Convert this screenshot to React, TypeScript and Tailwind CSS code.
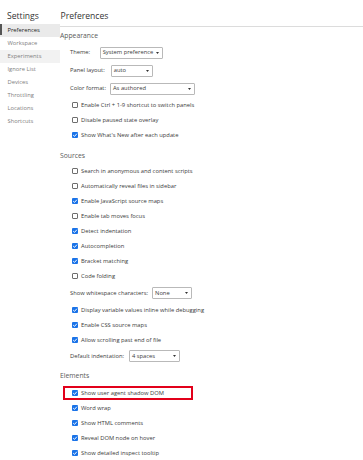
import React from 'react';

type Row =
  | { kind: 'check'; label: string; on: boolean; marked?: boolean }
  | { kind: 'select'; label: string; value: string; box: string; h: string };

const Check: React.FC<{ on: boolean }> = ({ on }) =>
  on ? (
    <span className="flex h-[6px] w-[6px] shrink-0 items-center justify-center rounded-[1px] bg-[#1a73e8]">
      <svg viewBox="0 0 10 10" className="h-[6px] w-[6px]">
        <path d="M2 5.2 L4.2 7.3 L8.2 2.8" fill="none" stroke="#fff" strokeWidth="1.6" />
      </svg>
    </span>
  ) : (
    <span className="h-[6px] w-[6px] shrink-0 rounded-[1px] border border-[#6e6e6e] bg-white" />
  );

const Select: React.FC<{ value: string; box: string }> = ({ value, box }) => (
  <span
    className={`flex h-[12px] items-center justify-between rounded-[1px] border border-[#b9b9b9] bg-white pl-[2px] pr-[3px] text-[#3a3a3a] ${box}`}
  >
    <span>{value}</span>
    <svg viewBox="0 0 6 4" className="h-[2px] w-[3px]">
      <path d="M0 0 H6 L3 4 Z" fill="#333" />
    </svg>
  </span>
);

const sections: { title: string; mt: string; rows: Row[] }[] = [
  {
    title: 'Appearance',
    mt: 'mt-[1.5px]',
    rows: [
      { kind: 'select', label: 'Theme:', value: 'System preference', box: 'ml-[9.5px] w-[63px]', h: 'h-[18px]' },
      { kind: 'select', label: 'Panel layout:', value: 'auto', box: 'ml-[6px] w-[42px]', h: 'h-[18px]' },
      { kind: 'select', label: 'Color format:', value: 'As authored', box: 'ml-[4px] w-[85px]', h: 'h-[18px]' },
      { kind: 'check', label: 'Enable Ctrl + 1-9 shortcut to switch panels', on: false },
      { kind: 'check', label: 'Disable paused state overlay', on: false },
      { kind: 'check', label: "Show What's New after each update", on: true },
    ],
  },
  {
    title: 'Sources',
    mt: 'mt-[6px]',
    rows: [
      { kind: 'check', label: 'Search in anonymous and content scripts', on: false },
      { kind: 'check', label: 'Automatically reveal files in sidebar', on: false },
      { kind: 'check', label: 'Enable JavaScript source maps', on: true },
      { kind: 'check', label: 'Enable tab moves focus', on: false },
      { kind: 'check', label: 'Detect indentation', on: true },
      { kind: 'check', label: 'Autocompletion', on: true },
      { kind: 'check', label: 'Bracket matching', on: true },
      { kind: 'check', label: 'Code folding', on: false },
      { kind: 'select', label: 'Show whitespace characters:', value: 'None', box: 'ml-[4px] w-[40px]', h: 'h-[19px]' },
      { kind: 'check', label: 'Display variable values inline while debugging', on: true },
      { kind: 'check', label: 'Enable CSS source maps', on: true },
      { kind: 'check', label: 'Allow scrolling past end of file', on: true },
      { kind: 'select', label: 'Default indentation:', value: '4 spaces', box: 'ml-[5px] w-[51px]', h: 'h-[17px]' },
    ],
  },
  {
    title: 'Elements',
    mt: 'mt-[4px]',
    rows: [
      { kind: 'check', label: 'Show user agent shadow DOM', on: true, marked: true },
      { kind: 'check', label: 'Word wrap', on: true },
      { kind: 'check', label: 'Show HTML comments', on: true },
      { kind: 'check', label: 'Reveal DOM node on hover', on: true },
      { kind: 'check', label: 'Show detailed inspect tooltip', on: true },
    ],
  },
];

const tabs = ['Preferences', 'Workspace', 'Experiments', 'Ignore List', 'Devices', 'Throttling', 'Locations', 'Shortcuts'];

export default function App() {
  return (
    <div className="flex h-[460px] w-[363px] overflow-hidden bg-white font-['Open_Sans',sans-serif] text-[#3a3a3a]">
      {/* sidebar */}
      <div className="w-[60px] shrink-0">
        <div className="flex h-[24px] items-center pl-[7px] pt-[8px] text-[8.6px] text-[#333]">Settings</div>
        {tabs.map((t, i) => (
          <div
            key={t}
            className={`relative flex h-[13px] items-center pl-[7.5px] text-[5.8px] ${
              i === 0 ? 'bg-[#eaeaea] text-[#222]' : i === 2 ? 'bg-[#f2f2f2] text-[#808080]' : 'text-[#808080]'
            }`}
          >
            {i === 0 && <span className="absolute left-0 top-0 h-[11px] w-[2px] bg-[#555]" />}
            {t}
          </div>
        ))}
      </div>

      {/* main */}
      <div className="flex-1">
        <div className="flex h-[27px] items-center border-b border-[#dcdcdc] pl-[0.5px] pt-[6px] text-[8.6px] text-[#333]">
          Preferences
        </div>
        {sections.map((s) => (
          <div key={s.title}>
            <div className={`flex h-[15px] items-center text-[6.8px] text-[#5a5a5a] ${s.mt}`}>{s.title}</div>
            {s.rows.map((r) =>
              r.kind === 'select' ? (
                <div key={r.label} className={`flex items-center pl-[10px] text-[5.8px] ${r.h}`}>
                  <span>{r.label}</span>
                  <Select value={r.value} box={r.box} />
                </div>
              ) : r.marked ? (
                <div key={r.label} className="mt-[2px] flex h-[15px] items-center">
                  <div className="ml-[2.5px] flex h-[14px] w-[130px] items-center gap-[3px] border-2 border-[#e2001a] pl-[7.5px] text-[5.8px]">
                    <Check on={r.on} />
                    <span>{r.label}</span>
                  </div>
                </div>
              ) : (
                <div key={r.label} className="flex h-[15px] items-center gap-[3px] pl-[12px] text-[5.8px]">
                  <Check on={r.on} />
                  <span>{r.label}</span>
                </div>
              )
            )}
          </div>
        ))}
      </div>
    </div>
  );
}
